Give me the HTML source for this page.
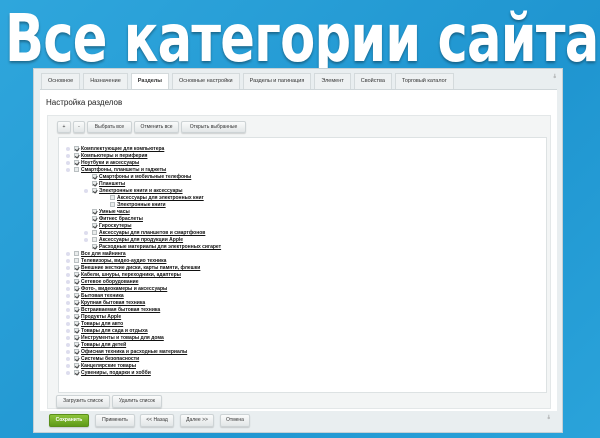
<!DOCTYPE html>
<html><head><meta charset="utf-8"><style>
*{margin:0;padding:0;box-sizing:border-box}
body{width:600px;height:438px;overflow:hidden;background:linear-gradient(135deg,#2fa6dc,#1f95d0 60%,#2aa3da);font-family:"Liberation Sans",sans-serif;position:relative}
.title{position:absolute;left:5px;top:0px;font-size:66px;font-weight:bold;color:#fff;font-family:"DejaVu Sans","Liberation Sans",sans-serif;letter-spacing:-1px;white-space:nowrap;text-shadow:0 2px 3px rgba(0,0,0,.35);transform:scaleX(0.775);transform-origin:left top}
.panel{position:absolute;left:33px;top:68px;width:530px;height:365px;background:#e9eef0;border:1px solid #c5d0d5}
.tabs{position:absolute;left:7px;top:4px;height:16px;display:flex;gap:3px}
.tab{height:16px;padding:0 6px;background:#eef1f2;border:1px solid #d4dadc;border-bottom:none;font-size:5.5px;line-height:15px;color:#333;white-space:nowrap}
.tab.a{background:#fff;font-weight:bold;height:17px}
.white{position:absolute;left:6px;top:20px;width:517px;height:322px;background:#fff;border-top:1px solid #cfd6d9}
.h{position:absolute;left:6px;top:8px;font-size:8px;color:#222}
.gray{position:absolute;left:7px;top:25px;width:504px;height:294px;background:#f3f5f5;border:1px solid #e3e7e8}
.btn{position:absolute;height:12px;background:linear-gradient(#fafbfb,#e2e6e7);border:1px solid #cdd3d5;border-radius:2px;font-size:5px;line-height:10px;text-align:center;color:#333;box-shadow:0 1px 1px rgba(0,0,0,.15)}
.tree{position:absolute;left:10px;top:46px;width:489px;height:256px;background:#fff;border:1px solid #dde2e3}
.r{position:absolute;font-size:5px;font-weight:bold;text-decoration:underline;color:#111;white-space:nowrap;line-height:6px}
.r i{position:absolute;width:5px;height:5px;background:#e9ecec;border:1px solid #b9bfc1;left:-7px;top:0}
.r b{position:absolute;width:4px;height:4px;border-radius:50%;background:#dde;left:-15px;top:1px}
.r i.c::after{content:"";position:absolute;left:1px;top:0;width:1.5px;height:2.5px;border:solid #444;border-width:0 .7px .7px 0;transform:rotate(40deg)}
.foot{position:absolute;top:345px;height:13px}
</style></head><body>
<div class="title">Все категории сайта</div>
<div class="panel">
 <div class="tabs">
  <div class="tab">Основное</div><div class="tab">Назначение</div><div class="tab a">Разделы</div><div class="tab">Основные настройки</div><div class="tab">Разделы и пагинация</div><div class="tab">Элемент</div><div class="tab">Свойства</div><div class="tab">Торговый каталог</div>
 </div>
 <div style="position:absolute;right:6px;top:5px;font-size:6px;color:#888">⫰</div>
 <div class="white">
  <div class="h">Настройка разделов</div>
  <div class="gray">
   <div class="btn" style="left:9px;top:5px;width:14px">+</div>
   <div class="btn" style="left:25px;top:5px;width:12px">-</div>
   <div class="btn" style="left:39px;top:5px;width:45px">Выбрать все</div>
   <div class="btn" style="left:86px;top:5px;width:45px">Отменить все</div>
   <div class="btn" style="left:133px;top:5px;width:65px">Открыть выбранные</div>
   <div class="tree" style="top:21px">
<div class="r" style="left:22px;top:8px"><b></b><i class="c"></i>Комплектующие для компьютера</div>
<div class="r" style="left:22px;top:15px"><b></b><i class="c"></i>Компьютеры и периферия</div>
<div class="r" style="left:22px;top:22px"><b></b><i class="c"></i>Ноутбуки и аксессуары</div>
<div class="r" style="left:22px;top:29px"><b></b><i></i>Смартфоны, планшеты и гаджеты</div>
<div class="r" style="left:40px;top:36px"><i class="c"></i>Смартфоны и мобильные телефоны</div>
<div class="r" style="left:40px;top:43px"><i class="c"></i>Планшеты</div>
<div class="r" style="left:40px;top:50px"><b></b><i class="c"></i>Электронные книги и аксессуары</div>
<div class="r" style="left:58px;top:57px"><i></i>Аксессуары для электронных книг</div>
<div class="r" style="left:58px;top:64px"><i></i>Электронные книги</div>
<div class="r" style="left:40px;top:71px"><i class="c"></i>Умные часы</div>
<div class="r" style="left:40px;top:78px"><i class="c"></i>Фитнес браслеты</div>
<div class="r" style="left:40px;top:85px"><i class="c"></i>Гироскутеры</div>
<div class="r" style="left:40px;top:92px"><b></b><i></i>Аксессуары для планшетов и смартфонов</div>
<div class="r" style="left:40px;top:99px"><b></b><i></i>Аксессуары для продукции Apple</div>
<div class="r" style="left:40px;top:106px"><i class="c"></i>Расходные материалы для электронных сигарет</div>
<div class="r" style="left:22px;top:113px"><b></b><i></i>Все для майнинга</div>
<div class="r" style="left:22px;top:120px"><b></b><i></i>Телевизоры, видео-аудио техника</div>
<div class="r" style="left:22px;top:127px"><b></b><i class="c"></i>Внешние жесткие диски, карты памяти, флешки</div>
<div class="r" style="left:22px;top:134px"><b></b><i class="c"></i>Кабели, шнуры, переходники, адаптеры</div>
<div class="r" style="left:22px;top:141px"><b></b><i class="c"></i>Сетевое оборудование</div>
<div class="r" style="left:22px;top:148px"><b></b><i class="c"></i>Фото-, видеокамеры и аксессуары</div>
<div class="r" style="left:22px;top:155px"><b></b><i class="c"></i>Бытовая техника</div>
<div class="r" style="left:22px;top:162px"><b></b><i class="c"></i>Крупная бытовая техника</div>
<div class="r" style="left:22px;top:169px"><b></b><i class="c"></i>Встраиваемая бытовая техника</div>
<div class="r" style="left:22px;top:176px"><b></b><i class="c"></i>Продукты Apple</div>
<div class="r" style="left:22px;top:183px"><b></b><i class="c"></i>Товары для авто</div>
<div class="r" style="left:22px;top:190px"><b></b><i class="c"></i>Товары для сада и отдыха</div>
<div class="r" style="left:22px;top:197px"><b></b><i class="c"></i>Инструменты и товары для дома</div>
<div class="r" style="left:22px;top:204px"><b></b><i class="c"></i>Товары для детей</div>
<div class="r" style="left:22px;top:211px"><b></b><i class="c"></i>Офисная техника и расходные материалы</div>
<div class="r" style="left:22px;top:218px"><b></b><i class="c"></i>Системы безопасности</div>
<div class="r" style="left:22px;top:225px"><b></b><i class="c"></i>Канцелярские товары</div>
<div class="r" style="left:22px;top:232px"><b></b><i class="c"></i>Сувениры, подарки и хобби</div>
   </div>
   <div class="btn" style="left:8px;top:279px;width:54px;height:13px;line-height:11px">Загрузить список</div>
   <div class="btn" style="left:64px;top:279px;width:50px;height:13px;line-height:11px">Удалить список</div>
  </div>
 </div>
 <div class="btn foot" style="left:15px;width:40px;background:linear-gradient(#8cc43a,#5f9a18);color:#fff;border-color:#5a8f1a;font-weight:bold;line-height:11px">Сохранить</div>
 <div class="btn foot" style="left:61px;width:40px;line-height:11px">Применить</div>
 <div class="btn foot" style="left:106px;width:34px;line-height:11px">&lt;&lt; Назад</div>
 <div class="btn foot" style="left:146px;width:34px;line-height:11px">Далее &gt;&gt;</div>
 <div class="btn foot" style="left:186px;width:30px;line-height:11px">Отмена</div>
 <div style="position:absolute;right:12px;top:346px;font-size:6px;color:#888">⫰</div>
</div>
</body></html>
